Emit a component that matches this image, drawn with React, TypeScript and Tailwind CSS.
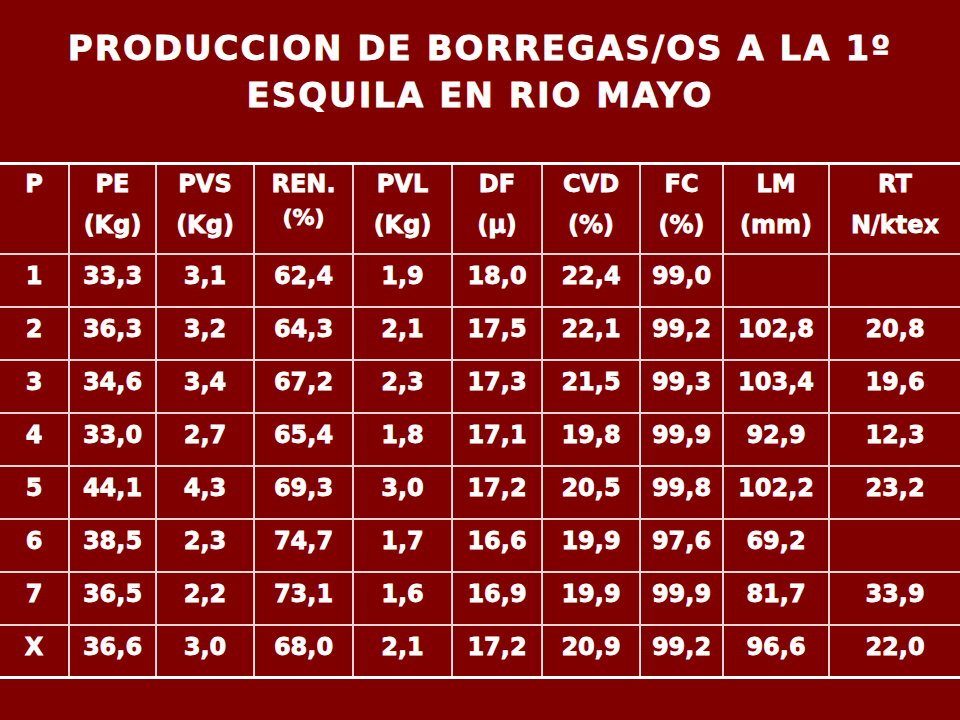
const headers: { top: string; bottom: string; small?: boolean }[] = [
  { top: 'P', bottom: '' },
  { top: 'PE', bottom: '(Kg)' },
  { top: 'PVS', bottom: '(Kg)' },
  { top: 'REN.', bottom: '(%)', small: true },
  { top: 'PVL', bottom: '(Kg)' },
  { top: 'DF', bottom: '(µ)' },
  { top: 'CVD', bottom: '(%)' },
  { top: 'FC', bottom: '(%)' },
  { top: 'LM', bottom: '(mm)' },
  { top: 'RT', bottom: 'N/ktex' },
];

const rows: string[][] = [
  ['1', '33,3', '3,1', '62,4', '1,9', '18,0', '22,4', '99,0', '', ''],
  ['2', '36,3', '3,2', '64,3', '2,1', '17,5', '22,1', '99,2', '102,8', '20,8'],
  ['3', '34,6', '3,4', '67,2', '2,3', '17,3', '21,5', '99,3', '103,4', '19,6'],
  ['4', '33,0', '2,7', '65,4', '1,8', '17,1', '19,8', '99,9', '92,9', '12,3'],
  ['5', '44,1', '4,3', '69,3', '3,0', '17,2', '20,5', '99,8', '102,2', '23,2'],
  ['6', '38,5', '2,3', '74,7', '1,7', '16,6', '19,9', '97,6', '69,2', ''],
  ['7', '36,5', '2,2', '73,1', '1,6', '16,9', '19,9', '99,9', '81,7', '33,9'],
  ['X', '36,6', '3,0', '68,0', '2,1', '17,2', '20,9', '99,2', '96,6', '22,0'],
];

const gridCols =
  'grid grid-cols-[68px_87px_98px_99px_99px_90px_98px_83px_106px_132px]';

function cellBorder(col: number) {
  return col === 0 ? '' : 'border-l-2 border-[#ecd6d6]';
}

export default function App() {
  return (
    <div className="h-[720px] w-[960px] overflow-hidden bg-[#800000] font-['DejaVu_Sans',sans-serif] font-bold text-white [-webkit-text-stroke:0.8px_#fff]">
      <h1 className="pt-[25px] text-center text-[34px] leading-[47px] tracking-[2px]">
        PRODUCCION DE BORREGAS/OS A LA 1º
        <br />
        ESQUILA EN RIO MAYO
      </h1>

      <div className="mt-[43px] border-y-[3px] border-white text-[24px] leading-[28px]">
        <div className={`${gridCols} border-b-2 border-[#ecd6d6]`}>
          {headers.map((h, i) => (
            <div key={h.top} className={`h-[88px] pt-[5px] text-center ${cellBorder(i)}`}>
              <div>{h.top}</div>
              {h.bottom &&
                (h.small ? (
                  <div className="mt-[6px] text-[22px]">{h.bottom}</div>
                ) : (
                  <div className="mt-[13px]">{h.bottom}</div>
                ))}
            </div>
          ))}
        </div>

        {rows.map((row, r) => (
          <div
            key={row[0]}
            className={`${gridCols} ${r < rows.length - 1 ? 'h-[53px] border-b-2 border-[#ecd6d6]' : 'h-[50px]'}`}
          >
            {row.map((v, c) => (
              <div key={c} className={`pt-[7px] text-center ${cellBorder(c)}`}>
                {v}
              </div>
            ))}
          </div>
        ))}
      </div>
    </div>
  );
}
